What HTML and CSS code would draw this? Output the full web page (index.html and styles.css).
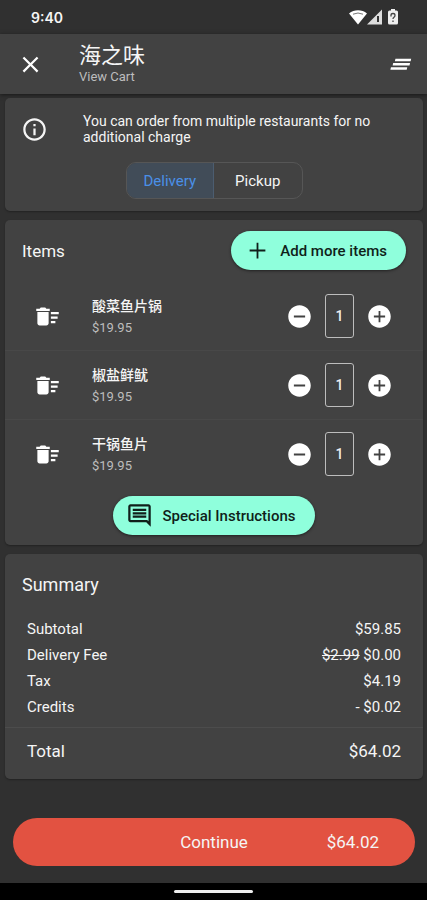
FILE: index.html
```html
<!DOCTYPE html>
<html lang="en">
<head>
<meta charset="utf-8">
<meta name="viewport" content="width=device-width, initial-scale=1">
<title>View Cart</title>
<link rel="stylesheet" href="styles.css">
</head>
<body>
<svg class="sprite" aria-hidden="true">
  <symbol id="sweep" viewBox="0 0 24 24"><path d="M15 16h4v2h-4zm0-8h7v2h-7zm0 4h6v2h-6zM3 18c0 1.1.9 2 2 2h6c1.1 0 2-.9 2-2V8H3v10zM14 5h-3l-1-1H6L5 5H2v2h12V5z"/></symbol>
  <symbol id="minus" viewBox="0 0 24 24"><path d="M12 2C6.480 2 2 6.480 2 12s4.480 10 10 10 10-4.480 10-10S17.520 2 12 2zm5 10.800H7v-1.600h10v1.600z"/></symbol>
  <symbol id="plus" viewBox="0 0 24 24"><path d="M12 2C6.480 2 2 6.480 2 12s4.480 10 10 10 10-4.480 10-10S17.520 2 12 2zm5 10.800h-4.200V17h-1.600v-4.200H7v-1.600h4.200V7h1.600v4.200H17v1.600z"/></symbol>
</svg>

<div class="status">
  <span class="clock">9:40</span>
  <div class="signals" aria-hidden="true">
    <svg width="18" height="16" viewBox="0 0 18 16"><path d="M0 4.500C5 .1 13 .1 18 4.500L9 15.500z" fill="#fff"/><path d="M4 5.200Q9 2.800 14 5.200" fill="none" stroke="#777"/></svg>
    <svg width="16" height="16" viewBox="0 0 16 16"><path d="M0 15.500L15 .5v15z" fill="#ddd"/><path d="M11 7v6" stroke="#333" stroke-width="2"/></svg>
    <svg class="battery" width="10" height="16" viewBox="0 0 10 16"><path d="M3 0h4v1.500h1.500q1.500 0 1.500 1.500v11q0 1.500-1.500 1.500h-7Q0 15.500 0 14V3q0-1.500 1.500-1.500H3z" fill="#eee"/><path d="M3 7.500V6.300Q3 4.500 5 4.500t2 1.800q0 1.200-1 1.900-1 .7-1 1.800M5 11.500V13" fill="none" stroke="#444" stroke-width="1.300"/></svg>
  </div>
</div>

<header class="appbar">
  <button class="icon-btn" aria-label="Close"><svg class="icon" viewBox="0 0 24 24"><path d="M19 6.410L17.590 5 12 10.590 6.410 5 5 6.410 10.590 12 5 17.590 6.410 19 12 13.410 17.590 19 19 17.590 13.410 12z"/></svg></button>
  <div class="heading">
    <h1>海之味</h1>
    <p>View Cart</p>
  </div>
  <button class="icon-btn" aria-label="Clear all"><svg class="icon" viewBox="0 0 24 24"><path d="M5 12.800h15l.5-2.200h-15zM3 16.600h14.500l.5-2.200H3.500zM7.500 6.800L7 9h14l.5-2.200z"/></svg></button>
</header>

<main>
  <section class="card notice">
    <div class="message">
      <svg class="icon" viewBox="0 0 24 24" aria-hidden="true"><path d="M11 7h2v2h-2zm0 4h2v6h-2zm1-9C6.480 2 2 6.480 2 12s4.480 10 10 10 10-4.480 10-10S17.520 2 12 2zm0 18c-4.410 0-8-3.590-8-8s3.590-8 8-8 8 3.590 8 8-3.590 8-8 8z"/></svg>
      <p>You can order from multiple restaurants for no additional charge</p>
    </div>
    <div class="segmented">
      <button class="selected" aria-pressed="true">Delivery</button>
      <button aria-pressed="false">Pickup</button>
    </div>
  </section>

  <section class="card items">
    <div class="items-head">
      <h2>Items</h2>
      <button class="pill add"><svg class="icon" viewBox="0 0 24 24" aria-hidden="true"><path d="M19 12.800h-6.200V19h-1.600v-6.200H5v-1.600h6.200V5h1.600v6.200H19v1.600z"/></svg>Add more items</button>
    </div>
    <ul>
      <li>
        <button class="icon-btn" aria-label="Remove 酸菜鱼片锅"><svg class="icon"><use href="#sweep"/></svg></button>
        <div class="product"><h3>酸菜鱼片锅</h3><p>$19.95</p></div>
        <div class="stepper">
          <button class="icon-btn" aria-label="Decrease"><svg class="icon"><use href="#minus"/></svg></button>
          <input aria-label="Quantity of 酸菜鱼片锅" value="1">
          <button class="icon-btn" aria-label="Increase"><svg class="icon"><use href="#plus"/></svg></button>
        </div>
      </li>
      <li>
        <button class="icon-btn" aria-label="Remove 椒盐鲜鱿"><svg class="icon"><use href="#sweep"/></svg></button>
        <div class="product"><h3>椒盐鲜鱿</h3><p>$19.95</p></div>
        <div class="stepper">
          <button class="icon-btn" aria-label="Decrease"><svg class="icon"><use href="#minus"/></svg></button>
          <input aria-label="Quantity of 椒盐鲜鱿" value="1">
          <button class="icon-btn" aria-label="Increase"><svg class="icon"><use href="#plus"/></svg></button>
        </div>
      </li>
      <li>
        <button class="icon-btn" aria-label="Remove 干锅鱼片"><svg class="icon"><use href="#sweep"/></svg></button>
        <div class="product"><h3>干锅鱼片</h3><p>$19.95</p></div>
        <div class="stepper">
          <button class="icon-btn" aria-label="Decrease"><svg class="icon"><use href="#minus"/></svg></button>
          <input aria-label="Quantity of 干锅鱼片" value="1">
          <button class="icon-btn" aria-label="Increase"><svg class="icon"><use href="#plus"/></svg></button>
        </div>
      </li>
    </ul>
    <button class="pill special"><svg class="icon" viewBox="0 0 24 24" aria-hidden="true"><path d="M21.990 4c0-1.100-.890-2-1.990-2H4c-1.100 0-2 .9-2 2v12c0 1.100.9 2 2 2h14l4 4-.010-18zM20 4v13.170L18.830 16H4V4h16zM6 12h12v2H6v-2zm0-3h12v2H6V9zm0-3h12v2H6V6z"/></svg>Special Instructions</button>
  </section>

  <section class="card summary">
    <h2>Summary</h2>
    <dl>
      <div><dt>Subtotal</dt><dd>$59.85</dd></div>
      <div><dt>Delivery Fee</dt><dd><s>$2.99</s> $0.00</dd></div>
      <div><dt>Tax</dt><dd>$4.19</dd></div>
      <div><dt>Credits</dt><dd>- $0.02</dd></div>
      <div class="total"><dt>Total</dt><dd>$64.02</dd></div>
    </dl>
  </section>
</main>

<footer>
  <button class="continue"><span></span><span>Continue</span><span class="amount">$64.02</span></button>
</footer>
<div class="navbar"><span></span></div>
</body>
</html>
```
FILE: styles.css
```css
* { box-sizing: border-box; }

body {
  margin: 0;
  min-height: 100vh;
  display: flex;
  flex-direction: column;
  background: #303030;
  color: #f5f5f5;
  font-family: Roboto, "Noto Sans CJK SC", sans-serif;
  font-size: 15px;
}

h1, h2, h3, p, ul, dl, dd { margin: 0; padding: 0; font-weight: 400; }

button {
  margin: 0;
  padding: 0;
  border: 0;
  background: none;
  color: inherit;
  font: inherit;
}

.sprite { position: absolute; width: 0; height: 0; }

.icon {
  display: block;
  flex: none;
  width: 27px;
  height: 27px;
  fill: currentColor;
}

.icon-btn { flex: none; color: #fff; }

.status {
  height: 34px;
  padding: 0 29px 0 31px;
  display: flex;
  align-items: center;
  justify-content: space-between;
}

.clock { font: 600 14px Inter, sans-serif; }

.signals { display: flex; }
.signals .battery { margin-left: 5px; }

.appbar {
  height: 60px;
  padding: 0 13px 0 17px;
  display: flex;
  align-items: center;
  background: #424242;
  box-shadow: 0 1px 4px rgba(0, 0, 0, .5);
}

.heading { flex: 1; padding-left: 35px; }
.heading h1 { font-size: 22px; line-height: 26px; }
.heading p { font-size: 13px; line-height: 16px; color: #bdbdbd; }

main {
  padding: 4px 4px 0 5px;
  display: flex;
  flex-direction: column;
  gap: 9px;
}

.card {
  background: #424242;
  border-radius: 5px;
  box-shadow: 0 1px 2px rgba(0, 0, 0, .3);
}

.notice { padding: 15px 16px 12px; }

.message {
  display: flex;
  align-items: center;
  gap: 35px;
}
.message p { font-size: 14px; line-height: 16px; }

.segmented {
  width: 177px;
  height: 37px;
  margin: 17px auto 0;
  display: grid;
  grid-template-columns: 1fr 1fr;
  border: 1px solid #565656;
  border-radius: 10px;
  overflow: hidden;
}
.segmented .selected {
  background: #414c58;
  border-right: 1px solid #4c5d70;
  color: #4a90e8;
}

h2 { font-size: 17px; line-height: 20px; }

.items { padding-bottom: 10px; }

.items-head {
  padding: 11px 17px 12px;
  display: flex;
  align-items: center;
  justify-content: space-between;
}

.pill {
  height: 39px;
  padding: 0 19px 0 13px;
  display: flex;
  align-items: center;
  gap: 9px;
  border-radius: 20px;
  background: #8fffdc;
  color: #101f1a;
  font-weight: 500;
  box-shadow: 0 1px 3px rgba(0, 0, 0, .5);
}
.special { margin: 8px auto 0; }

ul { list-style: none; }

li {
  padding: 12px 30px 12px 29px;
  display: flex;
  align-items: center;
}
li + li { border-top: 1px solid #484848; }

.product { flex: 1; padding-left: 31px; }
.product h3 { font-size: 14px; line-height: 24px; font-weight: 500; }
.product p { font-size: 13px; line-height: 20px; color: #bdbdbd; }

.stepper {
  display: flex;
  align-items: center;
  gap: 12px;
}

.stepper input {
  width: 29px;
  height: 44px;
  padding: 0;
  border: 1px solid #bdbdbd;
  border-radius: 3px;
  background: none;
  color: #eee;
  font: 500 14px Roboto, sans-serif;
  text-align: center;
}

.summary { padding-top: 21px; }
.summary h2 { padding: 0 17px; font-size: 18px; }

dl { padding-top: 21px; }
dl div {
  padding: 0 22px;
  display: flex;
  justify-content: space-between;
  line-height: 26px;
}
dl .total {
  margin-top: 7px;
  padding-top: 10px;
  padding-bottom: 15px;
  border-top: 1px solid #4c4c4c;
  font-size: 17px;
}

footer { margin-top: auto; padding: 0 12px 17px 13px; }

.continue {
  width: 100%;
  height: 48px;
  padding: 0 36px;
  display: grid;
  grid-template-columns: 1fr auto 1fr;
  align-items: center;
  border-radius: 24px;
  background: #e25241;
  font-size: 17px;
}
.amount { text-align: right; }

.navbar {
  height: 17px;
  display: flex;
  align-items: center;
  justify-content: center;
  background: #000;
}
.navbar span {
  width: 79px;
  height: 3px;
  border-radius: 2px;
  background: #eee;
}
```
